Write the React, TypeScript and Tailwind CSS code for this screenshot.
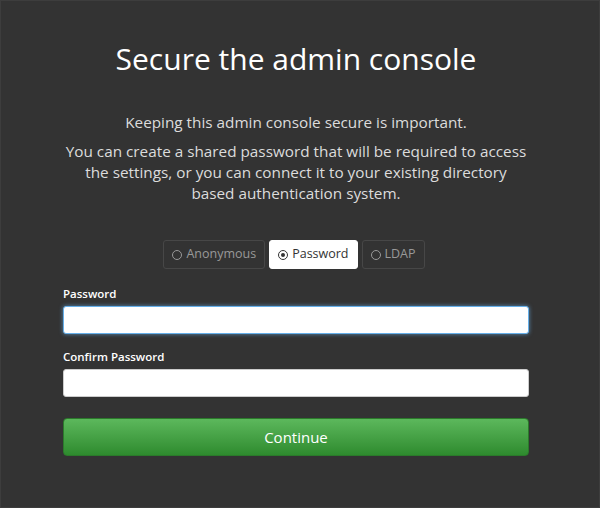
import { useState } from 'react';

type Mode = 'anonymous' | 'password' | 'ldap';

function Radio({ checked }: { checked: boolean }) {
  return (
    <span className="mr-[4px] inline-flex h-[10px] w-[10px] items-center justify-center rounded-full border-[1.5px] border-current">
      {checked && <span className="h-[4px] w-[4px] rounded-full bg-current" />}
    </span>
  );
}

export default function App() {
  const [mode, setMode] = useState<Mode>('password');

  const options: { id: Mode; label: string }[] = [
    { id: 'anonymous', label: 'Anonymous' },
    { id: 'password', label: 'Password' },
    { id: 'ldap', label: 'LDAP' },
  ];

  return (
    <main
      className="h-[508px] w-[600px] border border-[#3d3d3d] bg-[#333333] text-white"
      style={{ fontFamily: '"Open Sans", "Liberation Sans", sans-serif' }}
    >
      <div className="ml-[62px] w-[466px] pt-[38px]">
        <h1 className="text-center text-[30px] leading-[40px] font-normal">Secure the admin console</h1>

        <p className="mt-[33px] text-center text-[15.3px] leading-[21px] text-[#dcdcdc]">
          Keeping this admin console secure is important.
        </p>
        <p className="mx-auto mt-[8px] w-[464px] text-center text-[15.3px] leading-[21px] text-[#dcdcdc]">
          You can create a shared password that will be required to access the settings, or you can connect it to
          your existing directory based authentication system.
        </p>

        {/* Mode switcher */}
        <div className="mt-[36px] flex justify-center gap-[4px] pr-[4px]">
          {options.map((o) => {
            const active = mode === o.id;
            return (
              <button
                key={o.id}
                type="button"
                onClick={() => setMode(o.id)}
                className={
                  active
                    ? 'flex h-[29px] items-center rounded-[3px] border border-white bg-white px-[8px] text-[12.5px] text-[#333]'
                    : 'flex h-[29px] items-center rounded-[3px] border border-[#474747] bg-transparent px-[8px] text-[12.5px] text-[#999]'
                }
              >
                <Radio checked={active} />
                {o.label}
              </button>
            );
          })}
        </div>

        <form className="mt-[16px]" onSubmit={(e) => e.preventDefault()}>
          <label className="block text-[11.5px] leading-[17px] font-semibold">Password</label>
          <input
            type="password"
            className="mt-[4px] block h-[28px] w-full rounded-[3px] border border-[#66afe9] bg-white px-2 text-[13px] text-[#333] shadow-[0_0_4px_rgba(102,175,233,0.7)] outline-none"
          />

          <label className="mt-[14px] block text-[11.5px] leading-[17px] font-semibold">Confirm Password</label>
          <input
            type="password"
            className="mt-[4px] block h-[28px] w-full rounded-[3px] border border-[#ccc] bg-white px-2 text-[13px] text-[#333] outline-none"
          />

          <button
            type="submit"
            className="mt-[21px] block h-[38px] w-full rounded-[4px] border border-[#2b7a2b] bg-gradient-to-b from-[#5cb85c] to-[#2e8b2e] text-[15px] text-white"
          >
            Continue
          </button>
        </form>
      </div>
    </main>
  );
}
